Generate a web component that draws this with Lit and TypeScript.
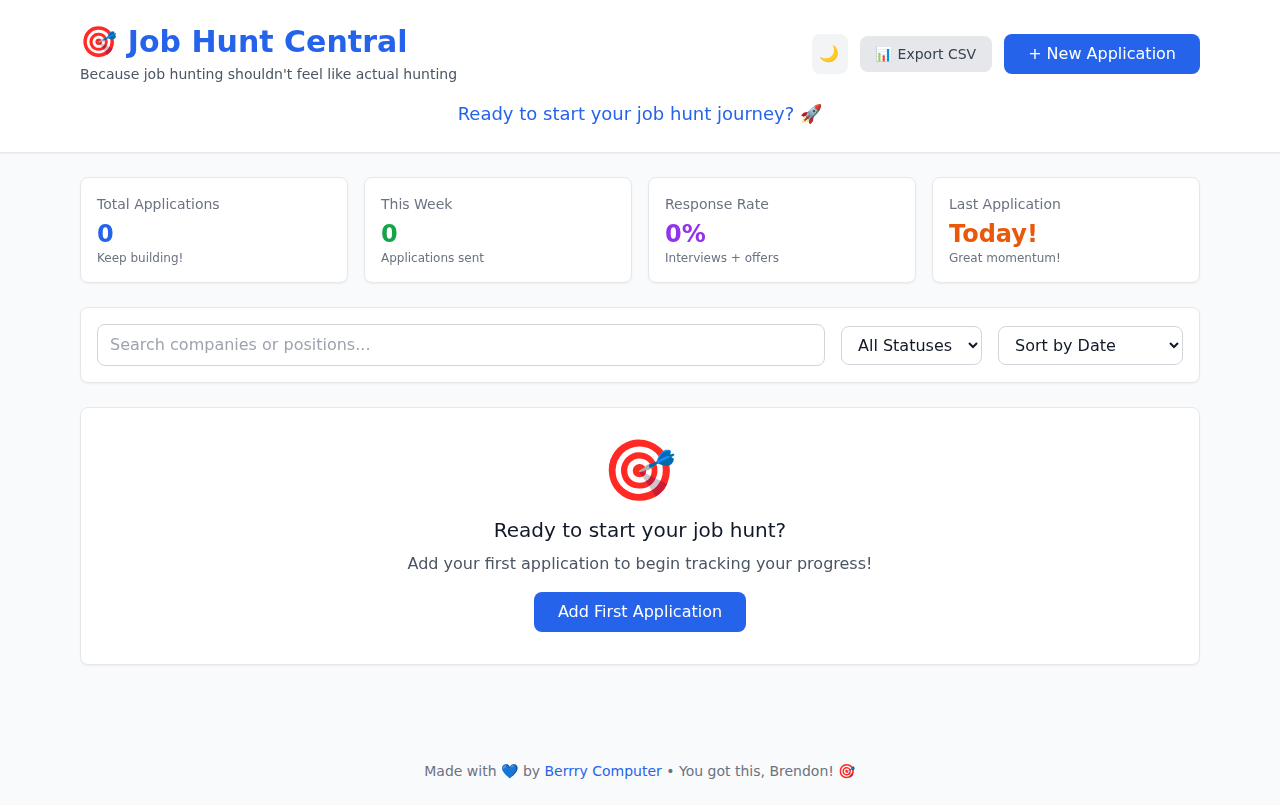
import { LitElement, html, css } from 'lit';
import { customElement } from 'lit/decorators.js';

const STATS = [
  { label: 'Total Applications', value: '0', note: 'Keep building!', color: '#2563eb' },
  { label: 'This Week', value: '0', note: 'Applications sent', color: '#16a34a' },
  { label: 'Response Rate', value: '0%', note: 'Interviews + offers', color: '#9333ea' },
  { label: 'Last Application', value: 'Today!', note: 'Great momentum!', color: '#ea580c' },
];

@customElement('app-root')
export class AppRoot extends LitElement {
  static styles = css`
    :host {
      display: block;
      min-height: 805px;
      background: #f9fafb;
      color: #111827;
      font-family: 'DejaVu Sans', 'Noto Color Emoji', sans-serif;
      line-height: 1.5;
    }

    * {
      box-sizing: border-box;
    }

    .container {
      width: 1120px;
      margin: 0 auto;
      will-change: transform;
    }

    header {
      background: #fff;
      border-bottom: 1px solid #e5e7eb;
      box-shadow: 0 1px 2px rgba(0, 0, 0, 0.05);
      padding: 24px 0;
    }

    .top {
      display: flex;
      justify-content: space-between;
      align-items: center;
    }

    h1 {
      margin: 0;
      font-size: 30px;
      line-height: 36px;
      font-weight: 700;
      color: #2563eb;
    }

    .sub {
      margin: 4px 0 0;
      font-size: 14px;
      line-height: 20px;
      color: #4b5563;
    }

    .actions {
      display: flex;
      align-items: center;
      gap: 12px;
    }

    button {
      font: inherit;
      border: 0;
      cursor: pointer;
    }

    .theme {
      width: 36px;
      height: 40px;
      border-radius: 8px;
      background: #f3f4f6;
      font-size: 16px;
      padding: 0;
    }

    .export {
      height: 36px;
      padding: 0 16px;
      border-radius: 8px;
      background: #e5e7eb;
      color: #374151;
      font-size: 14px;
    }

    .primary {
      height: 40px;
      padding: 0 24px;
      border-radius: 8px;
      background: #2563eb;
      color: #fff;
      font-size: 16px;
    }

    .tagline {
      margin: 16px 0 0;
      text-align: center;
      font-size: 18px;
      line-height: 28px;
      color: #2563eb;
    }

    .stats {
      display: grid;
      grid-template-columns: repeat(4, 1fr);
      gap: 16px;
      margin-top: 24px;
    }

    .card {
      background: #fff;
      border: 1px solid #e5e7eb;
      border-radius: 8px;
      box-shadow: 0 1px 2px rgba(0, 0, 0, 0.05);
    }

    .stat {
      padding: 16px;
    }

    .stat-label {
      font-size: 14px;
      line-height: 20px;
      color: #6b7280;
    }

    .stat-value {
      margin-top: 4px;
      font-size: 24px;
      line-height: 32px;
      font-weight: 700;
    }

    .stat-note {
      font-size: 12px;
      line-height: 16px;
      color: #6b7280;
    }

    .filters {
      display: flex;
      align-items: center;
      gap: 16px;
      margin-top: 24px;
      padding: 16px;
    }

    input {
      flex: 1;
      min-width: 0;
      height: 42px;
      padding: 7px 12px 9px;
      font: inherit;
      font-size: 16px;
      border: 1px solid #d1d5db;
      border-radius: 8px;
      color: #111827;
      background: #fff;
    }

    input::placeholder {
      color: #9ca3af;
    }

    select {
      height: 39px;
      padding: 8px 12px;
      font: inherit;
      font-size: 16px;
      color: #111827;
      border: 1px solid #d1d5db;
      border-radius: 8px;
      background: #fff;
    }

    .status {
      width: 141px;
    }

    .sort {
      width: 185px;
    }

    .empty {
      margin-top: 24px;
      padding: 32px;
      text-align: center;
    }

    .empty-icon {
      font-size: 60px;
      line-height: 60px;
      margin-bottom: 16px;
    }

    h2 {
      margin: 0 0 8px;
      font-size: 20px;
      line-height: 28px;
      font-weight: 400;
      color: #111827;
    }

    .empty p {
      margin: 0 0 16px;
      font-size: 16px;
      line-height: 24px;
      color: #4b5563;
    }

    footer {
      margin-top: 96px;
      text-align: center;
      font-size: 14px;
      line-height: 20px;
      color: #6b7280;
    }

    footer a {
      color: #2563eb;
      text-decoration: none;
    }
  `;

  render() {
    return html`
      <header>
        <div class="container">
          <div class="top">
            <div>
              <h1>🎯 Job Hunt Central</h1>
              <p class="sub">Because job hunting shouldn't feel like actual hunting</p>
            </div>
            <div class="actions">
              <button class="theme">🌙</button>
              <button class="export">📊 Export CSV</button>
              <button class="primary">+ New Application</button>
            </div>
          </div>
          <p class="tagline">Ready to start your job hunt journey? 🚀</p>
        </div>
      </header>
      <main class="container">
        <section class="stats">
          ${STATS.map(
            (s) => html`
              <div class="card stat">
                <div class="stat-label">${s.label}</div>
                <div class="stat-value" style="color: ${s.color}">${s.value}</div>
                <div class="stat-note">${s.note}</div>
              </div>
            `,
          )}
        </section>
        <section class="card filters">
          <input placeholder="Search companies or positions..." />
          <select class="status"><option>All Statuses</option></select>
          <select class="sort"><option>Sort by Date</option></select>
        </section>
        <section class="card empty">
          <div class="empty-icon">🎯</div>
          <h2>Ready to start your job hunt?</h2>
          <p>Add your first application to begin tracking your progress!</p>
          <button class="primary">Add First Application</button>
        </section>
      </main>
      <footer>
        Made with 💙 by <a href="#">Berrry Computer</a> • You got this, Brendon! 🎯
      </footer>
    `;
  }
}
